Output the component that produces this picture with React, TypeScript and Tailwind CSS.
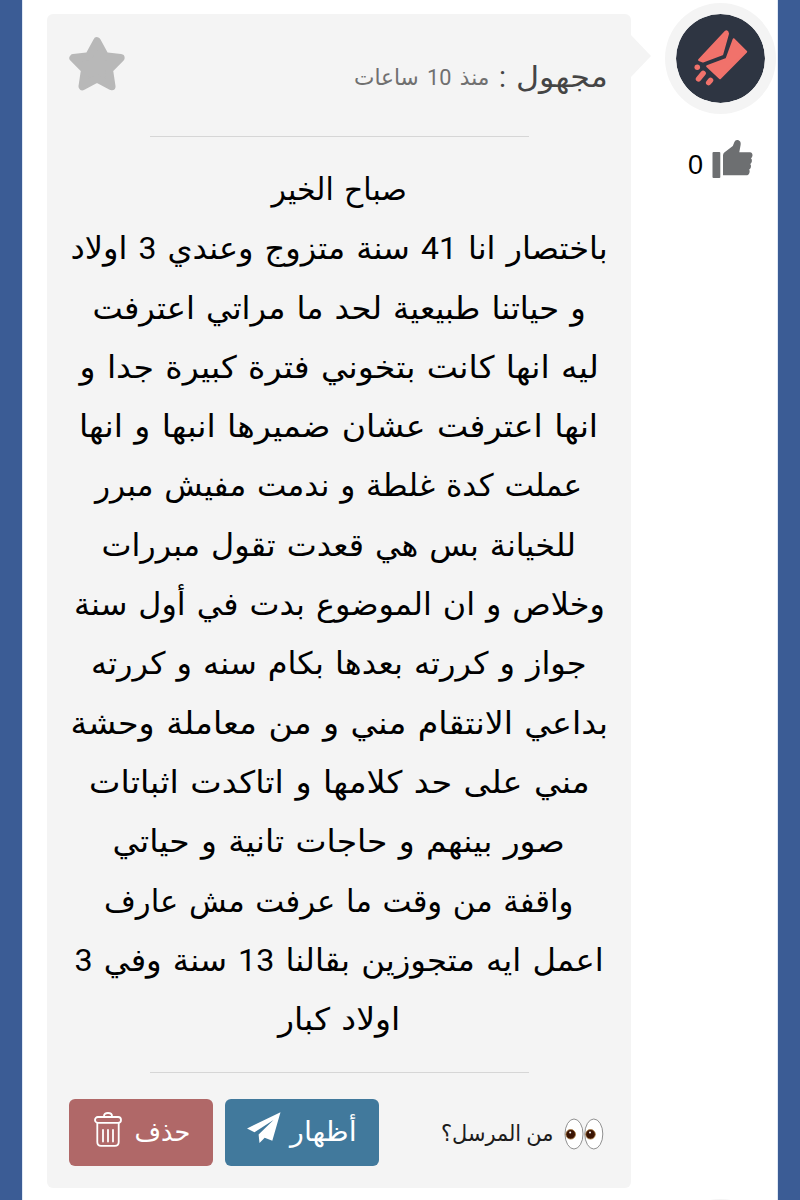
import React, { useLayoutEffect, useRef, useState } from 'react';

interface FitTextProps {
  width: number;
  className?: string;
  children: React.ReactNode;
}

const LINES = [
  { text: 'صباح الخير', width: 135 },
  { text: 'باختصار انا 41 سنة متزوج وعندي 3 اولاد', width: 537 },
  { text: 'و حياتنا طبيعية لحد ما مراتي اعترفت', width: 493 },
  { text: 'ليه انها كانت بتخوني فترة كبيرة جدا و', width: 519 },
  { text: 'انها اعترفت عشان ضميرها انبها و انها', width: 519 },
  { text: 'عملت كدة غلطة و ندمت مفيش مبرر', width: 487 },
  { text: 'للخيانة بس هي قعدت تقول مبررات', width: 474 },
  { text: 'وخلاص و ان الموضوع بدت في أول سنة', width: 531 },
  { text: 'جواز و كررته بعدها بكام سنه و كررته', width: 496 },
  { text: 'بداعي الانتقام مني و من معاملة وحشة', width: 537 },
  { text: 'مني على حد كلامها و اتاكدت اثباتات', width: 501 },
  { text: 'صور بينهم و حاجات تانية و حياتي', width: 452 },
  { text: 'واقفة من وقت ما عرفت مش عارف', width: 469 },
  { text: 'اعمل ايه متجوزين بقالنا 13 سنة وفي 3', width: 529 },
  { text: 'اولاد كبار', width: 122 },
];

// Scales a single line horizontally so it fills the given width
const FitText: React.FC<FitTextProps> = ({ width, className = '', children }) => {
  const ref = useRef<HTMLSpanElement>(null);
  const [scale, setScale] = useState(1);

  useLayoutEffect(() => {
    if (ref.current) setScale(width / ref.current.offsetWidth);
  }, [width]);

  return (
    <span className={`flex shrink-0 justify-center whitespace-nowrap ${className}`} style={{ width }}>
      <span ref={ref} className="shrink-0" style={{ transform: `scaleX(${scale})` }}>
        {children}
      </span>
    </span>
  );
};

const StarIcon = () => (
  <svg width="56" height="54" viewBox="0 0 56 54" fill="#b8b8b8" stroke="#b8b8b8" strokeWidth="8" strokeLinejoin="round">
    <path d="M28 4.3 36 19.2 51.6 21 40 32.6 42.5 49.3 28 41.5 13.5 49.3 16 32.6 4.4 21 20 19.2Z" />
  </svg>
);

const ThumbIcon = () => (
  <svg width="41" height="39" viewBox="0 0 41 39" fill="#6d6f71">
    <path d="M1.5 12h5.8q1 0 1 1v24q0 1-1 1H1.5q-1 0-1-1V13q0-1 1-1Z" />
    <path d="M11 15.500q0-2 1.300-3l8.500-6.500 1.600-4Q23.200 0 25 0c3 0 4.200 2.500 3.600 5L27.300 12.200H38q2.600.3 2.500 3.300-.3 2-1.500 2.800 1.400 1.500.8 3.400-.4 1.600-1.500 2.300 1.200 1.600.5 3.400-.5 1.400-1.600 2 .8 1.400.3 3-.7 2.800-3.500 2.900H11.500q-.5 0-.5-.5Z" />
  </svg>
);

const RocketMail = () => (
  <svg width="89" height="89" viewBox="0 0 90 90" className="rounded-full">
    <circle cx="45" cy="45" r="45" fill="#2e3542" />
    <g fill="#f1726b" stroke="#f1726b" strokeWidth="2" strokeLinejoin="round">
      <path d="M23.300 46.500 49.800 18q2-1.300 2.600.8.400 1 0 2L46.800 40.800l-19.500 7.300Z" />
      <path d="m58.300 25.500 12.700 12.700L44.500 65 31.500 52.800l19.500-7.300Z" />
    </g>
    <circle cx="21.500" cy="53.800" r="2.800" fill="#f1726b" />
    <path d="m27.500 60-4.800 5.700M35 67l-2 2.400" stroke="#f1726b" strokeWidth="5.400" strokeLinecap="round" />
  </svg>
);

const PlaneIcon = () => (
  <svg width="34" height="31" viewBox="0 0 34 31" fill="#fff">
    <path d="M33.500.2 0 16.500l7.500 3.800L26.500 8 11.600 22.500 12.500 31l5.200-5.300 7.600 3.100Z" />
  </svg>
);

const TrashIcon = () => (
  <svg width="28" height="35" viewBox="0 0 28 35" fill="none" stroke="#fff" strokeWidth="1.800" strokeLinecap="round">
    <path d="M10 5V4q0-3 4-3t4 3v1" />
    <rect x="1" y="5" width="26" height="5.800" rx="2.900" />
    <path d="M3.300 11v19q0 3.800 3.800 3.800h13.800q3.800 0 3.800-3.800V11M9 18v11.500M14 18v11.500M19 18v11.500" />
  </svg>
);

const EyesIcon = () => (
  <svg width="40" height="32" viewBox="0 0 40 32">
    <g fill="#fff" stroke="#858585" strokeWidth="0.900">
      <ellipse cx="10" cy="16" rx="9" ry="15" />
      <ellipse cx="29.800" cy="16" rx="9" ry="15" />
    </g>
    <g fill="#3b1504" stroke="#a8783e" strokeWidth="0.800">
      <circle cx="6.700" cy="16.300" r="4.800" />
      <circle cx="26.500" cy="16.300" r="4.800" />
    </g>
    <g fill="#fff">
      <circle cx="6.200" cy="14.500" r="1" />
      <circle cx="26" cy="14.500" r="1" />
    </g>
  </svg>
);

const App: React.FC = () => {
  return (
    <div className="h-[1200px] w-[800px] overflow-hidden bg-[#3b5c95] px-[22px] font-['Roboto','DejaVu_Sans',sans-serif]">
      <main className="flex h-full border-x border-[#dfe8f4] bg-white pl-6 pt-[14px]">
        <article className="relative flex h-[1174px] w-[584px] shrink-0 flex-col rounded-md bg-[#f4f4f4]">
          {/* Pointer towards the avatar */}
          <svg className="absolute left-full top-[21px]" width="20" height="42" viewBox="0 0 20 42" fill="#f4f4f4">
            <path d="M0 0 20 21 0 42Z" />
          </svg>

          <header className="flex h-[122px] items-start justify-between pl-[22px] pr-[23px] pt-[23px]">
            <StarIcon />
            <div dir="rtl" className="flex items-center pt-[19px] leading-10">
              <FitText width={92} className="text-[29px] text-[#454545]">مجهول</FitText>
              <span className="mx-[9px] w-[9px] text-center text-[29px] text-[#454545]">:</span>
              <FitText width={135} className="pt-[2px] text-[22px] text-[#707070] [word-spacing:3px]">منذ 10 ساعات</FitText>
            </div>
          </header>

          <div className="mx-auto h-px w-[379px] shrink-0 bg-[#d6d6d6]"></div>

          <div
            dir="rtl"
            className="flex h-[935px] shrink-0 flex-col items-center pt-[23px] text-[31px] leading-[59.3px] text-black [word-spacing:3px]"
          >
            {LINES.map((line) => (
              <FitText key={line.text} width={line.width}>{line.text}</FitText>
            ))}
          </div>

          <div className="mx-auto h-px w-[379px] shrink-0 bg-[#d6d6d6]"></div>

          <footer className="flex items-start pl-[22px] pr-[27px] pt-[26px]">
            <button className="flex h-[67px] w-[144px] rounded-md bg-[#b06868] pl-[25px] pt-[13px] text-white">
              <TrashIcon />
              <FitText width={56} className="ml-3 text-[27px] leading-10">حذف</FitText>
            </button>
            <button className="ml-3 flex h-[67px] w-[154px] rounded-md bg-[#41799c] pl-[22px] pt-[13px] text-white">
              <PlaneIcon />
              <FitText width={67} className="ml-[9px] text-[27px] leading-10">أظهار</FitText>
            </button>
            <div dir="rtl" className="ml-auto flex items-center pt-[18px]">
              <EyesIcon />
              <FitText width={112} className="mr-[11px] text-[22px] text-[#1c1c1c]">من المرسل؟</FitText>
            </div>
          </footer>
        </article>

        <aside className="-mt-[11px] ml-[34px] flex h-[1197px] w-[111px] shrink-0 flex-col items-center overflow-hidden">
          <div className="flex size-[111px] shrink-0 items-center justify-center rounded-full bg-[#f4f4f4]">
            <RocketMail />
          </div>
          <div className="mt-[26px] flex h-[39px] items-start">
            <span className="mr-[9px] mt-[9px] font-['Liberation_Sans'] text-[27px] leading-8 text-black">0</span>
            <ThumbIcon />
          </div>
          <div className="mt-[1020px] size-[111px] shrink-0 rounded-full bg-[#f4f4f4]"></div>
        </aside>
      </main>
    </div>
  );
};

export default App;
